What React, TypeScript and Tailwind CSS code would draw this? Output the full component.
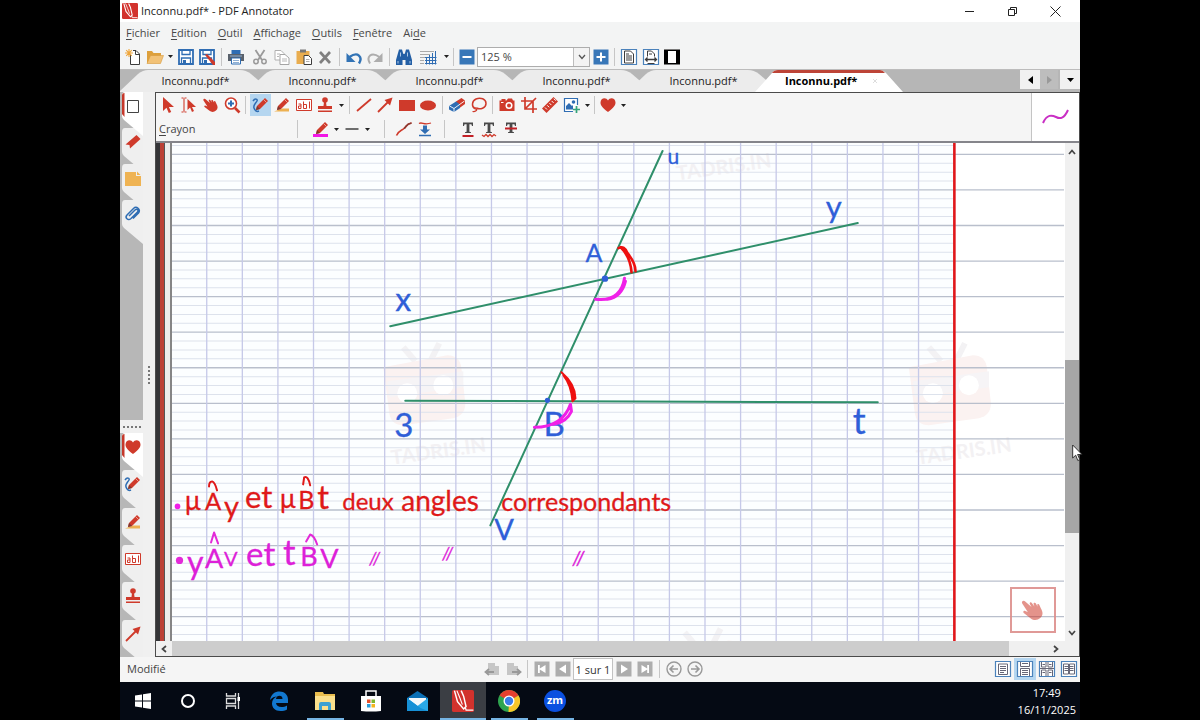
import type { ReactNode } from "react";

const RED = "#cf3a2b";
const BLUE = "#2f6db3";
const DARK = "#3c3c3c";

/* ---------- small building blocks ---------- */

function Icon({ children, size = 18 }: { children: ReactNode; size?: number }) {
  return (
    <svg width={size} height={size} viewBox="0 0 18 18" fill="none" aria-hidden="true" className="shrink-0">
      {children}
    </svg>
  );
}

function Tool({ label, children, active = false, className = "w-[21px]" }: { label: string; children: ReactNode; active?: boolean; className?: string }) {
  return (
    <button type="button" aria-label={label} className={`flex h-[22px] shrink-0 items-center justify-center ${active ? "bg-[#b5d6f0]" : ""} ${className}`}>
      {children}
    </button>
  );
}

function Caret({ label }: { label: string }) {
  return (
    <button type="button" aria-label={label} className="flex h-[22px] w-[10px] shrink-0 items-center justify-center">
      <svg width="5" height="3" viewBox="0 0 5 3" aria-hidden="true"><path d="M0 0h5L2.500 3z" fill="#222" /></svg>
    </button>
  );
}

function Sep({ className = "mx-[3px]" }: { className?: string }) {
  return <span className={`h-[18px] w-px shrink-0 bg-[#c6c6c6] ${className}`} />;
}

/* ---------- icons ---------- */

const PencilShape = ({ base }: { base?: ReactNode }) => (
  <Icon>
    {base}
    <path d="M4 14l1-4 8-8 3 3-8 8z" fill={RED} />
    <path d="M4 14l1-4 3 3z" fill="#7c3a30" />
    <path d="M11.500 3.500l3 3" stroke="#f6b5a8" strokeWidth="0.800" />
  </Icon>
);

const CrayonIcon = () => <PencilShape base={<path d="M1 5c2-3 5-2 4 0S1 9 2 12s3 4 5 3" stroke={BLUE} strokeWidth="1.500" />} />;
const MarkerIcon = () => <PencilShape base={<path d="M1 15.500h15v-3h-7z" fill="#edb152" />} />;
const PenColourIcon = () => <PencilShape base={<path d="M1 14h15v3H1z" fill="#f216e6" />} />;

const TextBoxIcon = () => (
  <Icon>
    <path d="M1.500 3.500h15v11h-15z" fill="#fff" stroke={RED} />
    <path d="M3.500 8h2.500v4.500H3.500V10H6" stroke={RED} />
    <path d="M8.500 5.500v7M14.500 5.500v7" stroke={RED} />
    <path d="M8.500 8.500h3v4h-3" stroke={RED} />
  </Icon>
);

const StampIcon = () => (
  <Icon>
    <circle cx="9" cy="4" r="2.800" fill={RED} />
    <path d="M8 6h2l.5 4H16v3H2v-3h5.500zM2 14.500h14V16H2z" fill={RED} />
  </Icon>
);

const LineIcon = () => <Icon><path d="M2 15L16 3" stroke={RED} strokeWidth="1.800" /></Icon>;
const ArrowIcon = () => (
  <Icon>
    <path d="M2 16L12 6" stroke={RED} strokeWidth="1.800" />
    <path d="M16.500 1.500L14 9.500 8.500 4z" fill={RED} />
  </Icon>
);
const HeartIcon = () => (
  <Icon>
    <path d="M9 16C3 11.500 1.500 9 1.500 6.500 1.500 2 7 .8 9 4.500 11 .8 16.500 2 16.500 6.500 16.500 9 15 11.500 9 16z" fill={RED} />
  </Icon>
);
const HandIcon = ({ size = 18 }: { size?: number }) => (
  <Icon size={size}>
    <path d="M1.500 3.200C2.200 2.400 3 2.600 3.600 3.200L8 7 6.800 4.800c-.4-1 .8-1.600 1.400-.7L10 6.500l-.6-1.600c-.3-1 1-1.400 1.500-.5l1.300 2.300-.2-.9c-.2-1 1-1.200 1.400-.3l1 2.300c1.700 3 1.600 5-.4 6.800-2 1.700-4.600 1.700-6.500.2L2.600 11c-.8-.7 0-1.800 1-1.300l1.800.7L2 5.200c-.5-.7-.9-1.400-.5-2z" fill={RED} />
  </Icon>
);
const PointerIcon = () => <Icon><path d="M4 1v14l3.500-3.300L9.800 17l2.400-1-2.300-5H15z" fill={RED} /></Icon>;
const TextPointerIcon = () => (
  <Icon>
    <path d="M1.500 2h2M4.500 2h2M1.500 16h2M4.500 16h2M4 2.500v13" stroke={RED} strokeWidth="1.100" />
    <path d="M7.500 3v11l2.600-2.500L12 16l2-1-2-4h4z" fill={RED} />
  </Icon>
);
const ZoomIcon = () => (
  <Icon>
    <circle cx="8" cy="7.500" r="5.500" fill="#fff" stroke={RED} strokeWidth="1.600" />
    <path d="M12 12l4.500 4.500" stroke={RED} strokeWidth="2.600" />
    <path d="M8 4.500v6M5 7.500h6" stroke={BLUE} strokeWidth="2" />
  </Icon>
);
const EraserIcon = () => (
  <Icon>
    <path d="M8 5.500L13.500 2 17 4.500V8L11.500 12 7 9z" fill={RED} />
    <path d="M8 5.500L12 8.500V12L6 16 1 13.500V10z" fill={BLUE} />
    <path d="M1.500 10L6 12.500 16.500 5M6 12.500V16" stroke="#fff" strokeWidth="0.900" />
  </Icon>
);
const LassoIcon = () => (
  <Icon>
    <path d="M5 12.500C1.500 11 1.500 5 6 3s10 0 10 4.500S10 14 6.500 12" stroke={RED} strokeWidth="1.500" />
    <path d="M6.500 11.500c-2 .3-2 2 0 1.500 1 1-1 3-4 2.500" stroke={RED} strokeWidth="1.200" />
  </Icon>
);
const CameraIcon = () => (
  <Icon>
    <path d="M1.500 4.500h2V3h4v1.500h1L10 2.500h4l1 2h1.500V15h-15z" fill={RED} />
    <circle cx="11" cy="9.500" r="3.500" fill="#fff" /><circle cx="11" cy="9.500" r="2" fill={RED} />
    <path d="M3 6.500h2.500" stroke="#fff" />
  </Icon>
);
const CropIcon = () => <Icon><path d="M5 1v12h12M1 5h12v12M5 13L16 2" stroke={RED} strokeWidth="1.700" /></Icon>;
const RulerIcon = () => (
  <Icon>
    <path d="M1 12.500L12.500 1 17 5.500 5.500 17z" fill={RED} />
    <path d="M4 11.500l2 2M6.200 9.300l2 2M8.400 7.100l2 2M10.600 4.900l2 2M12.800 2.700l2 2" stroke="#fff" />
  </Icon>
);
const ImageAddIcon = () => (
  <Icon>
    <path d="M10 15.500H1.500v-13h13V9" fill="#fff" stroke={BLUE} strokeWidth="1.200" />
    <path d="M3 13.500V10l3-3 3 3 1-1v4.500z" fill={BLUE} /><circle cx="10.500" cy="6" r="1.800" fill={BLUE} />
    <path d="M13.500 10v7M10 13.500h7" stroke="#35a37a" strokeWidth="1.700" />
  </Icon>
);
const ClipIcon = () => (
  <Icon>
    <path d="M5 11l6-6c2-2 4 .5 2.500 2L7 13.500c-3 2.700-6.500-.8-4-3.500l6.500-6.500c3-3 7.500 1 5 4.500L9 13.500" stroke={BLUE} strokeWidth="1.500" />
  </Icon>
);
const BookmarkIcon = () => <Icon><path d="M1.500 11.500L12.500 2l4 4L6 15.500l-.5-3.500z" fill={RED} /></Icon>;
const NoteIcon = () => <Icon><path d="M1 3h11v4h5v10H1z" fill="#efb353" /><path d="M13 2.500L16.500 6H13z" fill="#efb353" /></Icon>;

const NewIcon = () => (
  <Icon>
    <path d="M6.500 7v9.500h9V6L12 2.500H9" fill="#fff" stroke={DARK} /><path d="M11.500 2.500V6.500h4" stroke={DARK} />
    <path d="M5 1v8M1 5h8M2.200 2.200l5.600 5.600M7.800 2.200L2.200 7.800" stroke="#efa63b" strokeWidth="1.100" />
  </Icon>
);
const OpenIcon = () => <Icon><path d="M1 15V3h5l1.500 2H15v3" fill="#dda03c" /><path d="M1 15.500L4.500 7.500H17.500L14.500 15.500z" fill="#f2c277" stroke="#d79b3c" strokeWidth="0.600" /></Icon>;
const SaveIcon = ({ pen = false }: { pen?: boolean }) => (
  <Icon>
    <path d="M2 2h14v14H2z" fill="#fff" stroke={BLUE} strokeWidth="1.800" />
    <path d="M5 2.500v4h8v-4M4.500 16v-6h9v6" stroke={BLUE} strokeWidth="1.300" />
    <path d="M6 12h3v3H6z" fill={BLUE} />
    {pen && <path d="M7 7l2-1 8 8v3h-2z" fill={RED} />}
  </Icon>
);
const PrintIcon = () => (
  <Icon>
    <path d="M4.500 2h9v4h-9z" fill={BLUE} /><path d="M1 6h16v7H1z" fill="#59616b" />
    <path d="M4.500 10h9v6h-9z" fill="#fff" stroke={BLUE} /><path d="M6 12.500h6M6 14.500h6M3 8h12" stroke="#8fb0d4" />
  </Icon>
);
const CutIcon = () => (
  <Icon>
    <path d="M4.500 2l6.500 10M13.500 2L7 12" stroke="#9a9a9a" strokeWidth="1.800" />
    <circle cx="5" cy="13.500" r="2.200" stroke="#9a9a9a" strokeWidth="1.500" /><circle cx="13" cy="13.500" r="2.200" stroke="#9a9a9a" strokeWidth="1.500" />
  </Icon>
);
const CopyIcon = () => (
  <Icon>
    <path d="M2 2.500h6l3 3V12H2z" fill="#fff" stroke="#b0b0b0" /><path d="M7 6.500h5l4 3.500v6.500H7z" fill="#fff" stroke="#a5a5a5" />
    <path d="M4 6h3M4 8.500h2M9 11h5M9 13h5" stroke="#b7b7b7" />
  </Icon>
);
const PasteIcon = () => (
  <Icon>
    <path d="M1.500 3h13v13h-13z" fill="#e9ad4f" /><path d="M5 1.500h6v3H5z" fill="#777" />
    <path d="M9 7.500h4.500l3 3v6H9z" fill="#fff" stroke={DARK} /><path d="M11 11.500h3.500M11 13.500h3.500" stroke="#999" strokeWidth="0.800" />
  </Icon>
);
const DeleteIcon = () => <Icon><path d="M4 4l10 11M14 4L4 15" stroke="#808080" strokeWidth="2.700" /></Icon>;
const UndoIcon = () => <Icon><path d="M14 15.500C18 9 13 3 4.500 9" stroke="#3273b5" strokeWidth="2.400" /><path d="M1.500 5v9h9z" fill="#3273b5" /></Icon>;
const RedoIcon = () => <Icon><path d="M4 15.500C0 9 5 3 13.500 9" stroke="#adadad" strokeWidth="2" /><path d="M16.500 5v9h-9z" fill="#adadad" /></Icon>;
const BinocularsIcon = () => (
  <Icon>
    <path d="M3 5l1-3.500h3L8 5l.5 1h1L10 5l1-3.500h3L15 5l2 7v5h-6.500v-5h-3v5H1v-5z" fill="#235fa5" />
    <path d="M3 13v2.500M15 13v2.500M5.500 4.500v4M12.500 4.500v4" stroke="#bcd4ed" strokeWidth="0.900" />
  </Icon>
);
const GridIcon = () => (
  <Icon>
    <path d="M1 3.500h14M1 6.500h10M1 9.500h6M1 12.500h4M1 15.500h4" stroke="#a9a9a9" />
    <path d="M7.500 9v7.500M10.500 7v9.500M13.500 5v11.500M16.500 3v13.500M6 9.500h11.500M6 12.500h11.500M6 15.500h11.500" stroke={BLUE} />
  </Icon>
);
const ZoomStep = ({ plus = false }: { plus?: boolean }) => (
  <Icon><path d="M1.500 1.500h15v15h-15z" fill="#3877b8" /><path d={plus ? "M4.500 9h9M9 4.500v9" : "M4.500 9h9"} stroke="#fff" strokeWidth="2" /></Icon>
);
const PageIcon = ({ kind }: { kind: "full" | "width" | "single" | "rows" | "grid" | "book" }) => (
  <Icon>
    <path d="M1.500 1.500h15v15h-15z" fill="#fff" stroke="#4b82bb" strokeWidth="1.200" />
    {kind === "full" && <path d="M4.500 3h6l3 3v9h-9zM6 8h6M6 10h6M6 12h6M6 6h3" stroke={DARK} />}
    {kind === "width" && <><path d="M5.500 8.500V3h4l3 3v2.500M7 6h3M5.500 15.500h7" stroke={DARK} /><path d="M4 11.500h10M5.500 9.500l-2 2 2 2M12.500 9.500l2 2-2 2" stroke={DARK} strokeWidth="1.300" /></>}
    {kind === "single" && <path d="M4.500 4h9v10.500h-9zM6 6.500h6M6 8.500h6M6 10.500h6M6 12.500h4" stroke="#667" />}
    {kind === "rows" && <path d="M4.500 2v4.500h9V2M4.500 16V8.500h9V16M6 3.500h6M6 10.500h6M6 12.500h6M6 14.500h6" stroke="#667" />}
    {kind === "grid" && <path d="M3.500 2v5H8V2M10 2v5h4.500V2M3.500 16V10H8v6M10 16v-6h4.500v6M2 8.500h14M4.500 4.500h2.500M11 4.500h2.500M4.500 12.500h2.500M11 12.500h2.500" stroke="#667" />}
    {kind === "book" && <path d="M3.500 4h5v10h-5zM9.500 4h5v10h-5zM4.500 6.500H8M4.500 8.500H8M4.500 10.500H8M10 6.500h3.500M10 8.500h3.500M10 10.500h3.500" stroke="#667" />}
  </Icon>
);
const BlackPageIcon = () => <Icon><path d="M1 1.500h16v15H1z" fill="#000" /><path d="M5 3h8v12H5z" fill="#fff" /></Icon>;
const CurveIcon = () => <Icon><path d="M1.500 15.500C4 10 6 11 9 8.500s2-4.500 7.500-5.500" stroke={RED} strokeWidth="1.600" /><path d="M9 8.500c3-2.500 2-4.500 7.500-5.500" stroke="#8a3a32" strokeWidth="1.600" /></Icon>;
const PressureIcon = () => (
  <Icon>
    <path d="M3 3.500c3-2 5 2 12-.5" stroke={RED} strokeWidth="1.300" />
    <path d="M7 5.500h4v4h3l-5 4.500-5-4.500h3z" fill={BLUE} /><path d="M3 15.500h12" stroke={BLUE} strokeWidth="1.500" />
  </Icon>
);
const TextMarkIcon = ({ kind }: { kind: "under" | "wave" | "strike" }) => (
  <Icon>
    <path d="M4 2.500h10V6h-1l-.6-1.800h-2v7.500l1.600.5v.8H6v-.8l1.600-.5V4.200h-2L5 6H4z" fill="#4a4a4a" />
    {kind === "under" && <path d="M3.500 16h11" stroke="#c32026" strokeWidth="2" />}
    {kind === "wave" && <path d="M2 15l2 1.500 2-2 2 2 2-2 2 2 2-2 2 1.500" stroke={RED} strokeWidth="1.300" />}
    {kind === "strike" && <path d="M3 8.500h12" stroke="#c32026" strokeWidth="2" />}
  </Icon>
);
const AppLogo = ({ size = 16 }: { size?: number }) => (
  <Icon size={size}>
    <rect width="18" height="18" rx="1.500" fill="#d2322d" />
    <path d="M2 .5l2.500 9 5 6 2-2L9.500 5 7.500.5" stroke="#fff" strokeWidth="1.200" />
    <path d="M4 .5l2.500 6L8.500 12" stroke="#fff" strokeWidth="0.900" />
    <path d="M11 14.500l.5 2h6" stroke="#fff" />
  </Icon>
);

/* ---------- window chrome ---------- */

function TitleBar() {
  return (
    <header className="flex h-[22px] shrink-0 items-center bg-white pl-[2px]">
      <AppLogo />
      <h1 className="ml-[3px] grow text-[11px] leading-4 text-[#222]">Inconnu.pdf* - PDF Annotator</h1>
      <div className="flex">
        <button type="button" aria-label="Réduire" className="flex h-5 w-[43px] items-center justify-center">
          <svg width="11" height="11" viewBox="0 0 11 11"><path d="M1 5.500h9" stroke="#222" /></svg>
        </button>
        <button type="button" aria-label="Restaurer" className="flex h-5 w-[43px] items-center justify-center">
          <svg width="11" height="11" viewBox="0 0 11 11" fill="none"><path d="M1.500 3.500h6v6h-6zM3.500 3V1.500h6v6H8" stroke="#222" /></svg>
        </button>
        <button type="button" aria-label="Fermer" className="flex h-5 w-[46px] items-center justify-center pr-1">
          <svg width="11" height="11" viewBox="0 0 11 11"><path d="M.5 .5l10 10M10.500 .5l-10 10" stroke="#222" /></svg>
        </button>
      </div>
    </header>
  );
}

const MENUS: [string, string, string][] = [
  ["", "F", "ichier"], ["", "E", "dition"], ["", "O", "util"], ["", "A", "ffichage"], ["", "O", "utils"], ["", "F", "enêtre"], ["Ai", "d", "e"],
];

function MenuBar() {
  return (
    <nav className="flex h-[22px] shrink-0 items-center gap-[11px] bg-[#f3f4f4] pl-[6px]">
      {MENUS.map(([pre, key, post], i) => (
        <button type="button" key={i} className="text-[11px] leading-4 text-[#484848]">
          {pre}<span className="underline underline-offset-2">{key}</span>{post}
        </button>
      ))}
    </nav>
  );
}

function MainToolbar() {
  return (
    <div className="flex h-[25px] shrink-0 items-center bg-[#f3f4f4] pl-[2px]">
      <Tool label="Nouveau" className="w-[22px]"><NewIcon /></Tool>
      <Tool label="Ouvrir"><OpenIcon /></Tool>
      <Caret label="Documents récents" />
      <Tool label="Enregistrer"><SaveIcon /></Tool>
      <Tool label="Enregistrer sous" className="w-[22px]"><SaveIcon pen /></Tool>
      <Sep />
      <Tool label="Imprimer" className="mr-[2px] w-[22px]"><PrintIcon /></Tool>
      <Tool label="Couper" className="w-[22px]"><CutIcon /></Tool>
      <Tool label="Copier" className="w-[22px]"><CopyIcon /></Tool>
      <Tool label="Coller"><PasteIcon /></Tool>
      <Tool label="Supprimer" className="w-[22px]"><DeleteIcon /></Tool>
      <Sep />
      <Tool label="Annuler"><UndoIcon /></Tool>
      <Tool label="Rétablir" className="w-[22px]"><RedoIcon /></Tool>
      <Sep />
      <Tool label="Rechercher" className="w-[22px]"><BinocularsIcon /></Tool>
      <Tool label="Grille" className="w-[26px]"><GridIcon /></Tool>
      <Caret label="Options de grille" />
      <Sep className="mx-[2px]" />
      <Tool label="Zoom arrière"><ZoomStep /></Tool>
      <div className="flex h-5 w-[113px] shrink-0 border border-[#adadad] bg-white">
        <input aria-label="Zoom" defaultValue="125 %" className="w-0 grow pl-[3px] text-[11px] leading-4 text-[#444] outline-none" />
        <button type="button" aria-label="Choisir le zoom" className="flex w-4 items-center justify-center border-l border-[#bdbdbd] bg-[#f3f3f3]">
          <svg width="8" height="6" viewBox="0 0 8 6" fill="none"><path d="M1 1l3 3.500L7 1" stroke="#555" strokeWidth="1.300" /></svg>
        </button>
      </div>
      <Tool label="Zoom avant"><ZoomStep plus /></Tool>
      <Sep />
      <Tool label="Page entière" className="w-[22px]"><PageIcon kind="full" /></Tool>
      <Tool label="Largeur de page"><PageIcon kind="width" /></Tool>
      <Tool label="Plein écran" className="w-[22px]"><BlackPageIcon /></Tool>
    </div>
  );
}

function DocumentTabs() {
  return (
    <div className="flex h-[23px] shrink-0 overflow-hidden border-t border-[#bcbcbc] bg-[#b6b6b6] pl-3">
      {[1, 2, 3, 4, 5].map((n) => (
        <button type="button" key={n} className="relative flex w-[127px] shrink-0 items-center justify-center">
          <svg width="127" height="22" viewBox="0 0 127 22" className="absolute inset-0 overflow-visible" aria-hidden="true">
            <path d="M-13 22L6 4Q11 0 16 0H108Q114 0 119 4L140 22z" fill="#ececec" />
          </svg>
          <span className="relative text-[11px] font-medium leading-4 text-[#222]">Inconnu.pdf*</span>
        </button>
      ))}
      <button type="button" className="relative flex w-[127px] shrink-0 items-center pl-[18px]">
        <svg width="127" height="22" viewBox="0 0 127 22" className="absolute inset-0 overflow-visible" aria-hidden="true">
          <path d="M-12 22L5 3Q7 0 11 0H113Q116 0 119 3L136 22z" fill="#fff" />
          <path d="M5 3Q7 0 11 0H113Q116 0 118 3z" fill="#bd4437" />
          <path d="M106 9l4 4M110 9l-4 4" stroke="#ddd" />
        </svg>
        <span className="relative text-[11px] font-bold leading-4 text-black">Inconnu.pdf*</span>
      </button>
      <div className="ml-auto flex h-[19px]">
        <button type="button" aria-label="Onglet précédent" className="flex w-5 items-center justify-center bg-[#f1f1f1]">
          <svg width="5" height="8" viewBox="0 0 5 8"><path d="M5 0v8L0 4z" fill="#000" /></svg>
        </button>
        <button type="button" aria-label="Onglet suivant" className="flex w-[18px] items-center justify-center bg-[#bdbdbd]">
          <svg width="5" height="8" viewBox="0 0 5 8"><path d="M0 0v8l5-4z" fill="#999" /></svg>
        </button>
        <button type="button" aria-label="Liste des onglets" className="ml-[2px] flex w-[20px] items-center justify-center bg-[#f1f1f1]">
          <svg width="7" height="4" viewBox="0 0 7 4"><path d="M0 0h7L3.500 4z" fill="#000" /></svg>
        </button>
      </div>
    </div>
  );
}

/* ---------- side bar ---------- */

function SideTab({ label, active = false, className, children }: { label: string; active?: boolean; className: string; children: ReactNode }) {
  return (
    <button type="button" aria-label={label} className={`relative flex w-[23px] ${active ? "z-10" : ""} ${className}`}>
      <svg width="23" height="44" viewBox="0 0 23 44" className="absolute left-0 top-0" aria-hidden="true">
        <path d="M2 4Q2 0 5 0H23V44L4 28Q2 26 2 24z" fill={active ? "#fff" : "#efefef"} />
        {active && <path d="M2 3Q2 1 4.500 1V25L2 22z" fill="#c6382b" />}
      </svg>
      <span className="relative ml-1 mt-[5px] flex">{children}</span>
    </button>
  );
}

function SideBar() {
  return (
    <aside className="flex w-[35px] shrink-0 bg-[#f0f0f0]">
      <div className="flex w-[23px] flex-col">
        <div className="flex h-[328px] flex-col bg-[#b7b7b7]">
          <SideTab label="Pages" active className="h-9"><Icon><path d="M3.500 3.500h11v12h-11z" fill="#fff" stroke="#444" /></Icon></SideTab>
          <SideTab label="Signets" className="h-9"><BookmarkIcon /></SideTab>
          <SideTab label="Annotations" className="h-9"><NoteIcon /></SideTab>
          <SideTab label="Pièces jointes" className="h-9"><ClipIcon /></SideTab>
        </div>
        <div className="flex h-[13px] items-center justify-center bg-[#f0f0f0]">
          <span className="w-[18px] border-t-2 border-dotted border-[#777]" />
        </div>
        <div className="flex grow flex-col overflow-hidden bg-[#b7b7b7]">
          <SideTab label="Favoris" active className="h-0 grow"><HeartIcon /></SideTab>
          <SideTab label="Crayon favori" className="h-0 grow"><CrayonIcon /></SideTab>
          <SideTab label="Surligneur favori" className="h-0 grow"><MarkerIcon /></SideTab>
          <SideTab label="Texte favori" className="h-0 grow"><TextBoxIcon /></SideTab>
          <SideTab label="Tampon favori" className="h-0 grow"><StampIcon /></SideTab>
          <SideTab label="Flèche favorite" className="h-0 grow"><ArrowIcon /></SideTab>
        </div>
      </div>
      <div className="flex grow items-center justify-center">
        <span className="h-[18px] border-l-2 border-dotted border-[#777]" />
      </div>
    </aside>
  );
}

/* ---------- annotation tools ---------- */

function AnnotationTools() {
  return (
    <div className="flex h-[50px] shrink-0 border-b-2 border-[#85858b] bg-[#f5f5f5]">
      <div className="flex grow flex-col">
        <div className="flex h-6 items-center pl-px">
          <Tool label="Sélection"><PointerIcon /></Tool>
          <Tool label="Sélection de texte" className="w-[22px]"><TextPointerIcon /></Tool>
          <Tool label="Main"><HandIcon /></Tool>
          <Tool label="Loupe"><ZoomIcon /></Tool>
          <Sep />
          <Tool label="Crayon" active className="ml-px w-[21px]"><CrayonIcon /></Tool>
          <Tool label="Surligneur" className="w-[22px]"><MarkerIcon /></Tool>
          <Tool label="Texte"><TextBoxIcon /></Tool>
          <Tool label="Tampon" className="w-[22px]"><StampIcon /></Tool>
          <Caret label="Choisir un tampon" />
          <Sep />
          <Tool label="Ligne"><LineIcon /></Tool>
          <Tool label="Flèche" className="w-[22px]"><ArrowIcon /></Tool>
          <Tool label="Rectangle"><Icon><path d="M1 4h16v11H1z" fill={RED} /></Icon></Tool>
          <Tool label="Ellipse" className="w-[22px]"><Icon><ellipse cx="9" cy="9.500" rx="8" ry="5" fill={RED} /></Icon></Tool>
          <Sep />
          <Tool label="Gomme" className="w-[22px]"><EraserIcon /></Tool>
          <Tool label="Lasso"><LassoIcon /></Tool>
          <Sep />
          <Tool label="Capture" className="w-[22px]"><CameraIcon /></Tool>
          <Tool label="Rogner"><CropIcon /></Tool>
          <Tool label="Mesure" className="w-[22px]"><RulerIcon /></Tool>
          <Tool label="Insérer une image"><ImageAddIcon /></Tool>
          <Caret label="Options d'image" />
          <Sep className="mx-[2px]" />
          <Tool label="Favoris"><HeartIcon /></Tool>
          <Caret label="Choisir un favori" />
        </div>
        <div className="flex h-6 items-center pl-[3px]">
          <span className="w-[138px] text-[11px] leading-4 text-[#444]"><span className="underline underline-offset-2">C</span>rayon</span>
          <Sep className="mr-3" />
          <Tool label="Couleur"><PenColourIcon /></Tool>
          <Caret label="Choisir la couleur" />
          <Tool label="Épaisseur"><Icon><path d="M2.500 9h13" stroke="#333" strokeWidth="1.400" /></Icon></Tool>
          <Caret label="Choisir l'épaisseur" />
          <Sep className="ml-3 mr-2" />
          <Tool label="Lissage"><CurveIcon /></Tool>
          <Tool label="Pression" className="w-[22px]"><PressureIcon /></Tool>
          <Sep className="ml-2 mr-3" />
          <Tool label="Souligner"><TextMarkIcon kind="under" /></Tool>
          <Tool label="Souligner en vague" className="w-[22px]"><TextMarkIcon kind="wave" /></Tool>
          <Tool label="Barrer"><TextMarkIcon kind="strike" /></Tool>
        </div>
      </div>
      <div className="flex w-12 shrink-0 items-center justify-center border-l border-[#c4c4c4] bg-white">
        <svg width="28" height="16" viewBox="0 0 28 16" fill="none"><path d="M1 14C5 5 10 6 14 8s8 2 12-7" stroke="#c92fc4" strokeWidth="2" /></svg>
      </div>
    </div>
  );
}

/* ---------- ruled page with ink ---------- */

const TOP = 143;
const ROWS = Array.from({ length: 57 }, (_, i) => ({ y: 145.500 + i * 8.880, major: i % 4 === 1 }));
const COLUMNS = Array.from({ length: 21 }, (_, i) => 206.700 + i * 35.550);

function Watermark({ x, y, caption = true }: { x: number; y: number; caption?: boolean }) {
  return (
    <g transform={`translate(${x} ${y})`}>
      <path d="M-22 -38l12 14M14 -42l-8 16" stroke="#f3f2f4" strokeWidth="6" />
      <path d="M-42 -18L22 -30Q34 -30 36 -18L40 18Q40 30 28 33L-22 40Q-34 40 -36 28z" fill="#fbf2f1" />
      <path d="M-38 -4L38 -14v16l-74 10z" fill="#f6f4f6" />
      <circle cx="-18" cy="8" r="10" fill="#fff" /><circle cx="18" cy="0" r="10" fill="#fff" />
      {caption && <text x="-44" y="74" transform="rotate(-8)" fontSize="20" fontWeight="700" fill="#f3f1f3" fontFamily="Lato, sans-serif">TADRIS.IN</text>}
    </g>
  );
}

type Word = { t: string; x: number; y: number; s: number };
const BLUE_WORDS: Word[] = [
  { t: "u", x: 667, y: 164, s: 21 }, { t: "y", x: 825, y: 218, s: 31 }, { t: "A", x: 585, y: 262, s: 25 }, { t: "x", x: 395, y: 311, s: 32 },
  { t: "3", x: 394, y: 437, s: 33 }, { t: "B", x: 543, y: 436, s: 33 }, { t: "t", x: 852, y: 434, s: 36 }, { t: "V", x: 494, y: 540, s: 29 },
];
const RED_WORDS: Word[] = [
  { t: "μ", x: 185, y: 510, s: 26 }, { t: "A", x: 205, y: 510, s: 24 }, { t: "y", x: 224, y: 517, s: 29 }, { t: "et", x: 245, y: 508, s: 31 },
  { t: "μ", x: 280, y: 508, s: 26 }, { t: "B", x: 298, y: 509, s: 25 }, { t: "t", x: 317, y: 509, s: 33 }, { t: "deux", x: 342, y: 510, s: 24 },
  { t: "angles", x: 401, y: 511, s: 28 }, { t: "correspondants", x: 501, y: 511, s: 25 },
];
const PINK_WORDS: Word[] = [
  { t: "y", x: 187, y: 574, s: 32 }, { t: "A", x: 205, y: 568, s: 27 }, { t: "V", x: 224, y: 566, s: 20 }, { t: "et", x: 246, y: 566, s: 33 },
  { t: "t", x: 283, y: 565, s: 35 }, { t: "B", x: 300, y: 566, s: 27 }, { t: "V", x: 320, y: 568, s: 27 },
];
const DITTO_MARKS: Word[] = [
  { t: "//", x: 369, y: 565, s: 17 }, { t: "//", x: 442, y: 560, s: 17 }, { t: "//", x: 572, y: 565, s: 19 },
];

function Ink({ words, colour, slanted = false }: { words: Word[]; colour: string; slanted?: boolean }) {
  return (
    <g fill={colour} stroke={colour} strokeWidth="0.300" fontFamily="Lato, sans-serif" fontStyle={slanted ? "italic" : "normal"}>
      {words.map((w) => (
        <text key={`${w.t}${w.x}`} x={w.x} y={w.y} fontSize={w.s}>{w.t}</text>
      ))}
    </g>
  );
}

function Sheet() {
  return (
    <svg viewBox={`172 ${TOP} 892 499`} preserveAspectRatio="xMinYMin slice" className="absolute inset-0 h-full w-full" role="img" aria-label="Page annotée">
      <path d="M172 143h782v600H172z" fill="#fcfeff" />
      <Watermark x={425} y={385} />
      <Watermark x={950} y={385} />
      <Watermark x={710} y={101} />
      <Watermark x={706} y={670} caption={false} />
      {ROWS.map(({ y, major }) => (
        <path key={y} d={`M172 ${y}H${major ? 1063 : 953}`} stroke={major ? "#b9bfcc" : "#dde2ec"} strokeWidth={major ? 1.300 : 1} />
      ))}
      {COLUMNS.map((x) => <path key={x} d={`M${x} 143v600`} stroke="#c6c9e8" strokeWidth="1.300" />)}
      <path d="M953.500 143v600" stroke="#e0171b" strokeWidth="2.600" />

      <g stroke="#2f8f6a" strokeWidth="2" strokeLinecap="round">
        <path d="M662 151L490 525M390 326L857 223M405 400.500L877 402" />
      </g>
      <Ink words={BLUE_WORDS} colour="#2f5fd8" />
      <circle cx="604.500" cy="278.500" r="3.200" fill="#2f5fd8" />
      <circle cx="547" cy="400" r="2.600" fill="#2f5fd8" />

      <g fill="none" strokeLinecap="round" strokeLinejoin="round">
        <g stroke="#ee1010" strokeWidth="2.600">
          <path d="M618 248Q624 245 627 253Q635 263 635 271M620 247Q630 257 631 272" />
          <path d="M561 372Q575 384 575 398L572 401Q571 385 563 375" fill="#ee1010" strokeWidth="2" />
        </g>
        <g stroke="#f020e8" strokeWidth="3">
          <path d="M595 299Q620 302 624 278M607 299Q621 297 625 281" />
          <path d="M534 427Q562 427 570 404L571 411Q566 422 553 424" />
        </g>
        <path d="M209 486Q209 481 212 481Q215 482 217 490M303 484L304 477Q308 475 310 485" stroke="#e01818" strokeWidth="2" />
        <path d="M211 542L214 532L218 543M306 541L310 534Q314 535 317 544" stroke="#e32ad8" strokeWidth="2" />
      </g>
      <Ink words={RED_WORDS} colour="#df1919" />
      <Ink words={PINK_WORDS} colour="#dd20d8" />
      <Ink words={DITTO_MARKS} colour="#dd20d8" slanted />
      <circle cx="177.500" cy="506" r="2.800" fill="#f020e8" />
      <circle cx="179.500" cy="560" r="3.600" fill="#e32ad8" />
    </svg>
  );
}

const Chevron = ({ d }: { d: string }) => (
  <svg width="8" height="8" viewBox="0 0 8 8" fill="none" aria-hidden="true"><path d={d} stroke="#444" strokeWidth="1.700" /></svg>
);

function Workspace() {
  return (
    <main className="flex min-w-0 grow flex-col border border-[#4b4b4b]">
      <AnnotationTools />
      <div className="flex min-h-0 grow">
        <div className="w-[4px] bg-[#343437]" />
        <div className="w-[4px] bg-[#bb4036]" />
        <div className="w-[6px] border-l border-[#555] bg-[#ececec]" />
        <div className="w-[2px] bg-[#858585]" />
        <div className="relative min-w-0 grow bg-white">
          <Sheet />
          <button type="button" aria-label="Outil main" className="absolute bottom-2 right-[9px] flex size-[46px] items-center justify-center border-2 border-[#dd8f8c] opacity-90">
            <span className="flex opacity-60"><HandIcon size={26} /></span>
          </button>
        </div>
        <div className="flex w-[14px] flex-col items-center bg-[#f0f0f0]">
          <button type="button" aria-label="Défiler vers le haut" className="flex h-[17px] items-center"><Chevron d="M1 6l3-3.500L7 6" /></button>
          <div className="grow-[200] basis-0" />
          <div className="w-full grow-[174] basis-0 bg-[#a6a6a6]" />
          <div className="grow-[92] basis-0" />
          <button type="button" aria-label="Défiler vers le bas" className="flex h-[16px] items-center"><Chevron d="M1 2l3 3.500L7 2" /></button>
        </div>
      </div>
      <div className="flex h-[15px] shrink-0 bg-[#f0f0f0]">
        <button type="button" aria-label="Défiler à gauche" className="flex w-4 items-center justify-center"><Chevron d="M6 1L2.500 4L6 7" /></button>
        <div className="grow bg-[#cdcdcd]" />
        <button type="button" aria-label="Défiler à droite" className="ml-[38px] mr-[14px] flex w-[18px] items-center justify-center"><Chevron d="M2 1l3.500 3L2 7" /></button>
      </div>
    </main>
  );
}

/* ---------- status bar ---------- */

const NavIcon = ({ d }: { d: string }) => <Icon><path d="M1.500 1.500h15v15h-15z" fill="#adadad" /><path d={d} fill="#fff" /></Icon>;

function StatusBar() {
  return (
    <footer className="flex h-[25px] shrink-0 items-center bg-[#f5f5f5] pb-px pl-[7px]">
      <span className="w-[354px] text-[11px] leading-4 text-[#444]">Modifié</span>
      <Tool label="Page annotée précédente" className="w-[22px]"><Icon><path d="M5 3h7v3h4v9H5z" fill="#c6c6c6" /><path d="M11 12H3M6 9l-3.500 3L6 15" stroke="#999" strokeWidth="1.800" /></Icon></Tool>
      <Tool label="Page annotée suivante"><Icon><path d="M2 3h7v3h4v9H2z" fill="#c6c6c6" /><path d="M7 12h8M12 9l3.500 3L12 15" stroke="#999" strokeWidth="1.800" /></Icon></Tool>
      <Sep />
      <Tool label="Première page"><NavIcon d="M5 5h1.800v3.600L12.500 5v8L6.800 9.400V13H5z" /></Tool>
      <Tool label="Page précédente"><NavIcon d="M12 4.500v9L5 9z" /></Tool>
      <input aria-label="Page" defaultValue="1 sur 1" className="h-[22px] w-[40px] shrink-0 border border-[#c2c2c2] bg-white text-center text-[11px] leading-4 text-[#333] outline-none" />
      <Tool label="Page suivante"><NavIcon d="M6 4.500v9L13 9z" /></Tool>
      <Tool label="Dernière page" className="w-[22px]"><NavIcon d="M13 5h-1.800v3.600L5.500 5v8l5.700-3.600V13H13z" /></Tool>
      <Sep />
      <Tool label="Vue précédente"><Icon><circle cx="9" cy="9" r="7" stroke="#999" strokeWidth="1.400" /><path d="M13 9H5.500M8.500 5.500L5 9l3.500 3.500" stroke="#999" strokeWidth="1.600" /></Icon></Tool>
      <Tool label="Vue suivante" className="w-[22px]"><Icon><circle cx="9" cy="9" r="7" stroke="#999" strokeWidth="1.400" /><path d="M5 9h7.500M9.500 5.500L13 9l-3.500 3.500" stroke="#999" strokeWidth="1.600" /></Icon></Tool>
      <div className="ml-auto flex">
        <Tool label="Une page" className="w-[22px]"><PageIcon kind="single" /></Tool>
        <Tool label="Défilement" active className="w-[22px]"><PageIcon kind="rows" /></Tool>
        <Tool label="Grille de pages" className="w-[22px]"><PageIcon kind="grid" /></Tool>
        <Tool label="Double page" className="w-[22px]"><PageIcon kind="book" /></Tool>
      </div>
    </footer>
  );
}

/* ---------- task bar ---------- */

function Task({ label, open = false, active = false, children }: { label: string; open?: boolean; active?: boolean; children: ReactNode }) {
  return (
    <button type="button" aria-label={label} className={`flex w-[46px] flex-col items-center pt-[2px] ${active ? "bg-[#3b3e44]" : ""}`}>
      <span className="flex grow items-center">{children}</span>
      <span className={`h-[2px] ${active ? "w-full" : "w-[37px]"} ${open || active ? "bg-[#76b4e4]" : ""}`} />
    </button>
  );
}

function TaskBar() {
  return (
    <div className="flex h-[38px] shrink-0 bg-[#050a14]">
      <button type="button" aria-label="Démarrer" className="flex w-[45px] items-center justify-center">
        <svg width="16" height="16" viewBox="0 0 16 16"><path d="M0 2.500l7-1v6H0zM8 1.300L16 0v7.500H8zM0 8.500h7v6l-7-1zM8 8.500h8V16l-8-1.300z" fill="#fff" /></svg>
      </button>
      <button type="button" aria-label="Cortana" className="flex w-[45px] items-center justify-center">
        <svg width="16" height="16" viewBox="0 0 16 16" fill="none"><circle cx="8" cy="8" r="6" stroke="#fff" strokeWidth="2" /></svg>
      </button>
      <button type="button" aria-label="Vue des tâches" className="mr-px flex w-[45px] items-center justify-center">
        <svg width="16" height="16" viewBox="0 0 16 16" fill="none"><path d="M1.500 0v3h9V0M1.500 5.500h9v5h-9zM1.500 16v-3h9v3M13.500 0v16" stroke="#ddd" strokeWidth="1.300" /><path d="M12.500 4h2.500v4h-2.500z" fill="#fff" /></svg>
      </button>
      <Task label="Edge">
        <svg width="20" height="20" viewBox="0 0 20 20"><path d="M1 9C2 3 6 .5 10.500 .5c5 0 8.500 3.500 8.500 8V12H7c.3 2.500 2.500 4 5.500 4 2 0 4-.6 5.500-1.600v4C16.300 19.400 14 20 11.500 20 6 20 3 16.500 3 12.500c0-3.500 2.300-6 5-7C5.500 5.500 3 6.500 1 9zm6-1h6.500C13.500 5.800 12.300 4.800 10.500 4.800S7.300 6 7 8z" fill="#1278d0" fillRule="evenodd" /></svg>
      </Task>
      <Task label="Explorateur" open>
        <svg width="20" height="18" viewBox="0 0 20 18"><path d="M0 0h8l1 2h11v16H0z" fill="#e9bd4e" /><path d="M0 4h20v14H0z" fill="#fbe08c" /><path d="M4 18v-6q0-2 2-2h8q2 0 2 2v6h-3v-4H7v4z" fill="#3ba1d3" /></svg>
      </Task>
      <Task label="Microsoft Store">
        <svg width="20" height="22" viewBox="0 0 20 22" fill="none"><path d="M5 7V1h10v6" stroke="#fff" strokeWidth="1.500" /><path d="M0 6h20v15q-10 1-20 0z" fill="#fff" /><path d="M6 9.500h3.500V13H6z" fill="#e7502b" /><path d="M10.500 9.500H14V13h-3.500z" fill="#7db72f" /><path d="M6 14h3.500v3.500H6z" fill="#2a9fdc" /><path d="M10.500 14H14v3.500h-3.500z" fill="#f4b51e" /></svg>
      </Task>
      <Task label="Courrier">
        <svg width="21" height="20" viewBox="0 0 21 20"><path d="M0 7L10.500 0 21 7v13H0z" fill="#0b6fb5" /><path d="M2 7h17v8H2z" fill="#f4f8fb" /><path d="M0 7l10.500 8L21 7v13H0z" fill="#2aa9e8" /><path d="M0 7l13.500 10L21 20H0z" fill="#1690d6" /></svg>
      </Task>
      <Task label="PDF Annotator" active><AppLogo size={22} /></Task>
      <Task label="Chrome" open>
        <svg width="22" height="22" viewBox="0 0 22 22"><circle cx="11" cy="11" r="11" fill="#2ea44f" /><path d="M11 11L1.500 5.500A11 11 0 0 1 20.500 5.500z" fill="#e5402f" /><path d="M11 11L20.500 5.500A11 11 0 0 1 10.500 22z" fill="#f9c628" /><circle cx="11" cy="11" r="5.500" fill="#fff" /><circle cx="11" cy="11" r="4.200" fill="#3b7de8" /></svg>
      </Task>
      <Task label="Zoom" open>
        <span className="flex size-[22px] items-center justify-center rounded-full bg-[#0b50e0] pb-[2px] text-[11px] font-bold leading-4 text-white">zm</span>
      </Task>
      <div className="ml-auto mr-1 flex flex-col justify-center text-center text-[11px] leading-[17px] text-white">
        <time>17:49</time>
        <time>16/11/2025</time>
      </div>
    </div>
  );
}

export default function App() {
  return (
    <div className="flex h-screen justify-center overflow-hidden bg-black font-['Open_Sans','Noto_Sans',sans-serif]">
      <div className="relative flex w-4/5 flex-col">
        <TitleBar />
        <MenuBar />
        <MainToolbar />
        <DocumentTabs />
        <div className="flex min-h-0 grow">
          <SideBar />
          <Workspace />
        </div>
        <StatusBar />
        <TaskBar />
        <svg width="11" height="18" viewBox="0 0 11 18" className="absolute right-0 top-[444px] mr-[-3px]" aria-hidden="true">
          <path d="M.7 1v13l3-2.800L5.800 16.500l2-.9L5.600 10.500H10z" fill="#fff" stroke="#222" strokeWidth="0.900" />
        </svg>
      </div>
    </div>
  );
}
